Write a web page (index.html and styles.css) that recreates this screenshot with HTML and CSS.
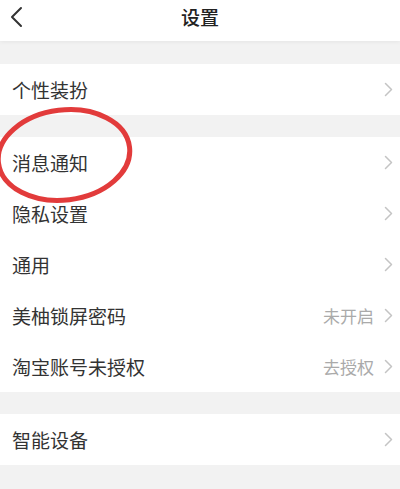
FILE: index.html
```html
<!DOCTYPE html>
<html lang="zh-CN">
<head>
<meta charset="utf-8">
<title>设置</title>
<link rel="stylesheet" href="styles.css">
</head>
<body>
<div class="page">
  <header class="topbar">
    <span class="back">
      <svg width="14" height="22" viewBox="0 0 14 22"><polyline points="12,2 3,11 12,20" fill="none" stroke="#333" stroke-width="2" stroke-linecap="round" stroke-linejoin="round"/></svg>
    </span>
    <h1 class="title">设置</h1>
  </header>

  <section class="group">
    <div class="row"><span class="label">个性装扮</span><span class="right"><svg class="chev" width="9" height="15" viewBox="0 0 9 15"><polyline points="1.5,1.5 7.5,7.5 1.5,13.5" fill="none" stroke="#c4c4c4" stroke-width="1.5" stroke-linecap="round" stroke-linejoin="round"/></svg></span></div>
  </section>

  <section class="group">
    <div class="row"><span class="label">消息通知</span><span class="right"><svg class="chev" width="9" height="15" viewBox="0 0 9 15"><polyline points="1.5,1.5 7.5,7.5 1.5,13.5" fill="none" stroke="#c4c4c4" stroke-width="1.5" stroke-linecap="round" stroke-linejoin="round"/></svg></span></div>
    <div class="row"><span class="label">隐私设置</span><span class="right"><svg class="chev" width="9" height="15" viewBox="0 0 9 15"><polyline points="1.5,1.5 7.5,7.5 1.5,13.5" fill="none" stroke="#c4c4c4" stroke-width="1.5" stroke-linecap="round" stroke-linejoin="round"/></svg></span></div>
    <div class="row"><span class="label">通用</span><span class="right"><svg class="chev" width="9" height="15" viewBox="0 0 9 15"><polyline points="1.5,1.5 7.5,7.5 1.5,13.5" fill="none" stroke="#c4c4c4" stroke-width="1.5" stroke-linecap="round" stroke-linejoin="round"/></svg></span></div>
    <div class="row"><span class="label">美柚锁屏密码</span><span class="right"><span class="value">未开启</span><svg class="chev" width="9" height="15" viewBox="0 0 9 15"><polyline points="1.5,1.5 7.5,7.5 1.5,13.5" fill="none" stroke="#c4c4c4" stroke-width="1.5" stroke-linecap="round" stroke-linejoin="round"/></svg></span></div>
    <div class="row"><span class="label">淘宝账号未授权</span><span class="right"><span class="value">去授权</span><svg class="chev" width="9" height="15" viewBox="0 0 9 15"><polyline points="1.5,1.5 7.5,7.5 1.5,13.5" fill="none" stroke="#c4c4c4" stroke-width="1.5" stroke-linecap="round" stroke-linejoin="round"/></svg></span></div>
  </section>

  <section class="group">
    <div class="row"><span class="label">智能设备</span><span class="right"><svg class="chev" width="9" height="15" viewBox="0 0 9 15"><polyline points="1.5,1.5 7.5,7.5 1.5,13.5" fill="none" stroke="#c4c4c4" stroke-width="1.5" stroke-linecap="round" stroke-linejoin="round"/></svg></span></div>
  </section>

  <svg class="circle-mark" width="150" height="110" viewBox="0 0 150 110">
    <ellipse cx="68" cy="52" rx="66" ry="45" transform="rotate(-7 68 52)" fill="none" stroke="#e23b3b" stroke-width="5"/>
  </svg>
</div>
</body>
</html>
```

FILE: styles.css
```css
html, body {
  margin: 0;
  padding: 0;
}
body {
  background: #f2f2f2;
  font-family: "Noto Sans CJK SC", "Noto Sans", sans-serif;
  color: #333;
}
.page {
  position: relative;
  width: 400px;
  height: 489px;
  overflow: hidden;
  background: #f2f2f2;
}
.topbar {
  position: relative;
  height: 41px;
  background: #fff;
  display: flex;
  align-items: flex-start;
  justify-content: center;
  box-shadow: 0 1px 4px rgba(0, 0, 0, 0.06);
  margin-bottom: 23px;
}
.back {
  position: absolute;
  left: 9px;
  top: 6px;
  display: flex;
}
.title {
  margin: 0;
  font-size: 19px;
  font-weight: 500;
  line-height: 33px;
  color: #222;
}
.group {
  background: #fff;
  margin-bottom: 22px;
}
.row {
  height: 51px;
  display: flex;
  align-items: center;
  justify-content: space-between;
  padding: 0 7px 0 12px;
}
.label {
  font-size: 19px;
  color: #333;
}
.right {
  display: flex;
  align-items: center;
  gap: 10px;
}
.value {
  font-size: 17px;
  color: #aaa;
}
.chev {
  display: block;
}
.circle-mark {
  position: absolute;
  left: -4px;
  top: 103px;
}
```
